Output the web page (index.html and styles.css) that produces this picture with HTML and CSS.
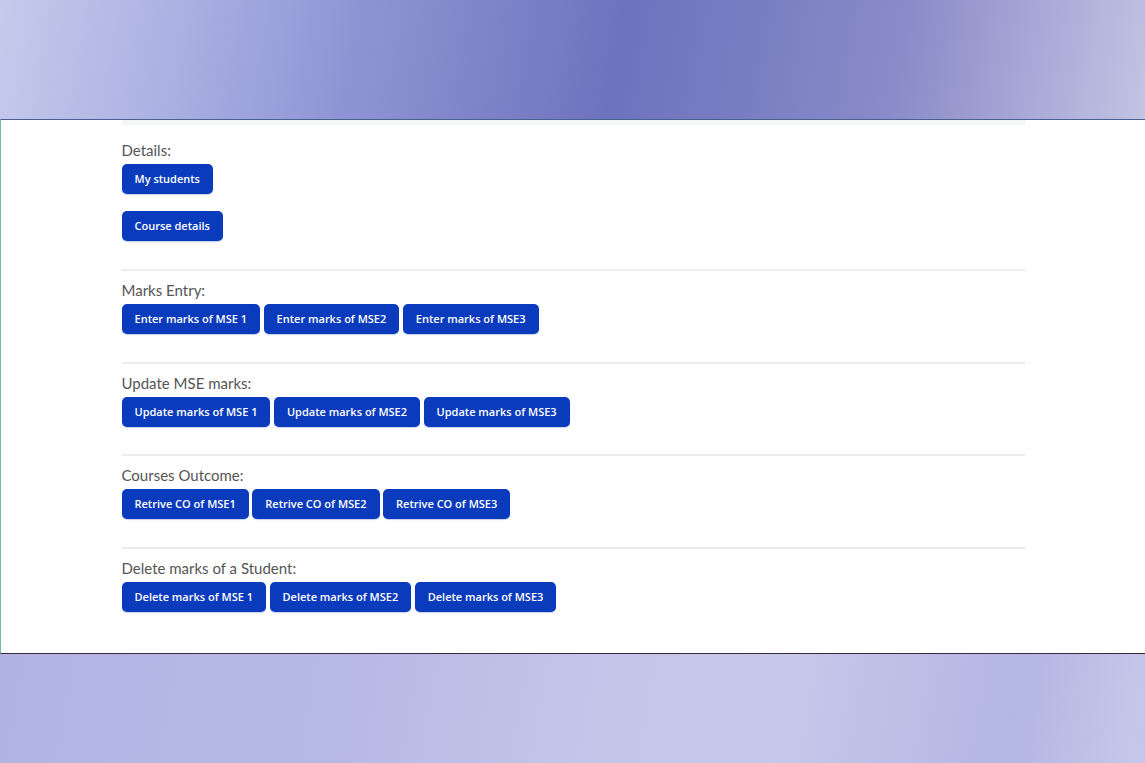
FILE: index.html
```html
<!DOCTYPE html>
<html lang="en">
<head>
<meta charset="utf-8">
<title>Faculty Dashboard</title>
<link rel="stylesheet" href="styles.css">
</head>
<body>
<div class="page">
  <div class="band band-top"></div>
  <main class="panel">
    <div class="container">
      <div class="strip"></div>
      <section class="section first">
        <p class="label">Details:</p>
        <div class="stack">
          <button class="btn">My students</button>
          <button class="btn">Course details</button>
        </div>
      </section>
      <hr class="rule">
      <section class="section">
        <p class="label">Marks Entry:</p>
        <div class="row">
          <button class="btn">Enter marks of MSE 1</button>
          <button class="btn">Enter marks of MSE2</button>
          <button class="btn">Enter marks of MSE3</button>
        </div>
      </section>
      <hr class="rule">
      <section class="section">
        <p class="label">Update MSE marks:</p>
        <div class="row">
          <button class="btn">Update marks of MSE 1</button>
          <button class="btn">Update marks of MSE2</button>
          <button class="btn">Update marks of MSE3</button>
        </div>
      </section>
      <hr class="rule">
      <section class="section">
        <p class="label">Courses Outcome:</p>
        <div class="row">
          <button class="btn">Retrive CO of MSE1</button>
          <button class="btn">Retrive CO of MSE2</button>
          <button class="btn">Retrive CO of MSE3</button>
        </div>
      </section>
      <hr class="rule">
      <section class="section">
        <p class="label">Delete marks of a Student:</p>
        <div class="row">
          <button class="btn">Delete marks of MSE 1</button>
          <button class="btn">Delete marks of MSE2</button>
          <button class="btn">Delete marks of MSE3</button>
        </div>
      </section>
    </div>
  </main>
  <div class="band band-bottom"></div>
</div>
</body>
</html>
```

FILE: styles.css
```css
* { box-sizing: border-box; }

html, body {
  margin: 0;
  padding: 0;
  height: 100%;
}

body {
  font-family: "Open Sans", "Noto Sans", sans-serif;
  background: #b8bbe6;
  overflow: hidden;
}

.page {
  display: flex;
  flex-direction: column;
  height: 763px;
}

.band-top {
  height: 119px;
  flex: none;
  background:
    linear-gradient(100deg,
      #c6caec 0%,
      #aab0e2 16%,
      #8d93d3 32%,
      #7a7fc5 46%,
      #6d72bd 54%,
      #7a7fc3 66%,
      #8a8bc8 78%,
      #aaa9d8 90%,
      #c3c3e3 100%);
}

.panel {
  flex: none;
  height: 535px;
  background: #ffffff;
  border-top: 1px solid #4d5f8e;
  border-left: 1px solid #6fb9b4;
  border-bottom: 1px solid #3d2a3c;
}

.band-bottom {
  flex: 1;
  background:
    linear-gradient(100deg,
      #b1b3e3 0%,
      #b7b9e5 30%,
      #c2c4e9 50%,
      #c5c8ea 68%,
      #b4b6e3 88%,
      #c6c8ea 100%);
}

.container {
  width: 903px;
  margin: 0 auto;
}

.strip {
  height: 5px;
  background: #f5f6f6;
}

.section {
  padding-top: 10px;
  padding-bottom: 27.6px;
}

.section.first {
  padding-top: 16px;
  padding-bottom: 28px;
}

.label {
  margin: 0 0 5px;
  font-family: "Lato", "Open Sans", sans-serif;
  font-size: 15px;
  line-height: 18px;
  color: #555555;
}

.stack {
  display: flex;
  flex-direction: column;
  align-items: flex-start;
  gap: 17px;
}

.row {
  display: flex;
  gap: 3.5px;
}

.btn {
  height: 30px;
  padding: 0 13px;
  border: none;
  border-radius: 5px;
  background: #0b3bbd;
  color: #ffffff;
  font-family: "Open Sans", "Noto Sans", sans-serif;
  font-size: 11px;
  font-weight: 600;
  line-height: 30px;
  white-space: nowrap;
  box-shadow: 0 1px 1px rgba(11, 59, 189, 0.25);
}

.rule {
  margin: 0;
  border: none;
  height: 2px;
  background: #ececec;
}
```
